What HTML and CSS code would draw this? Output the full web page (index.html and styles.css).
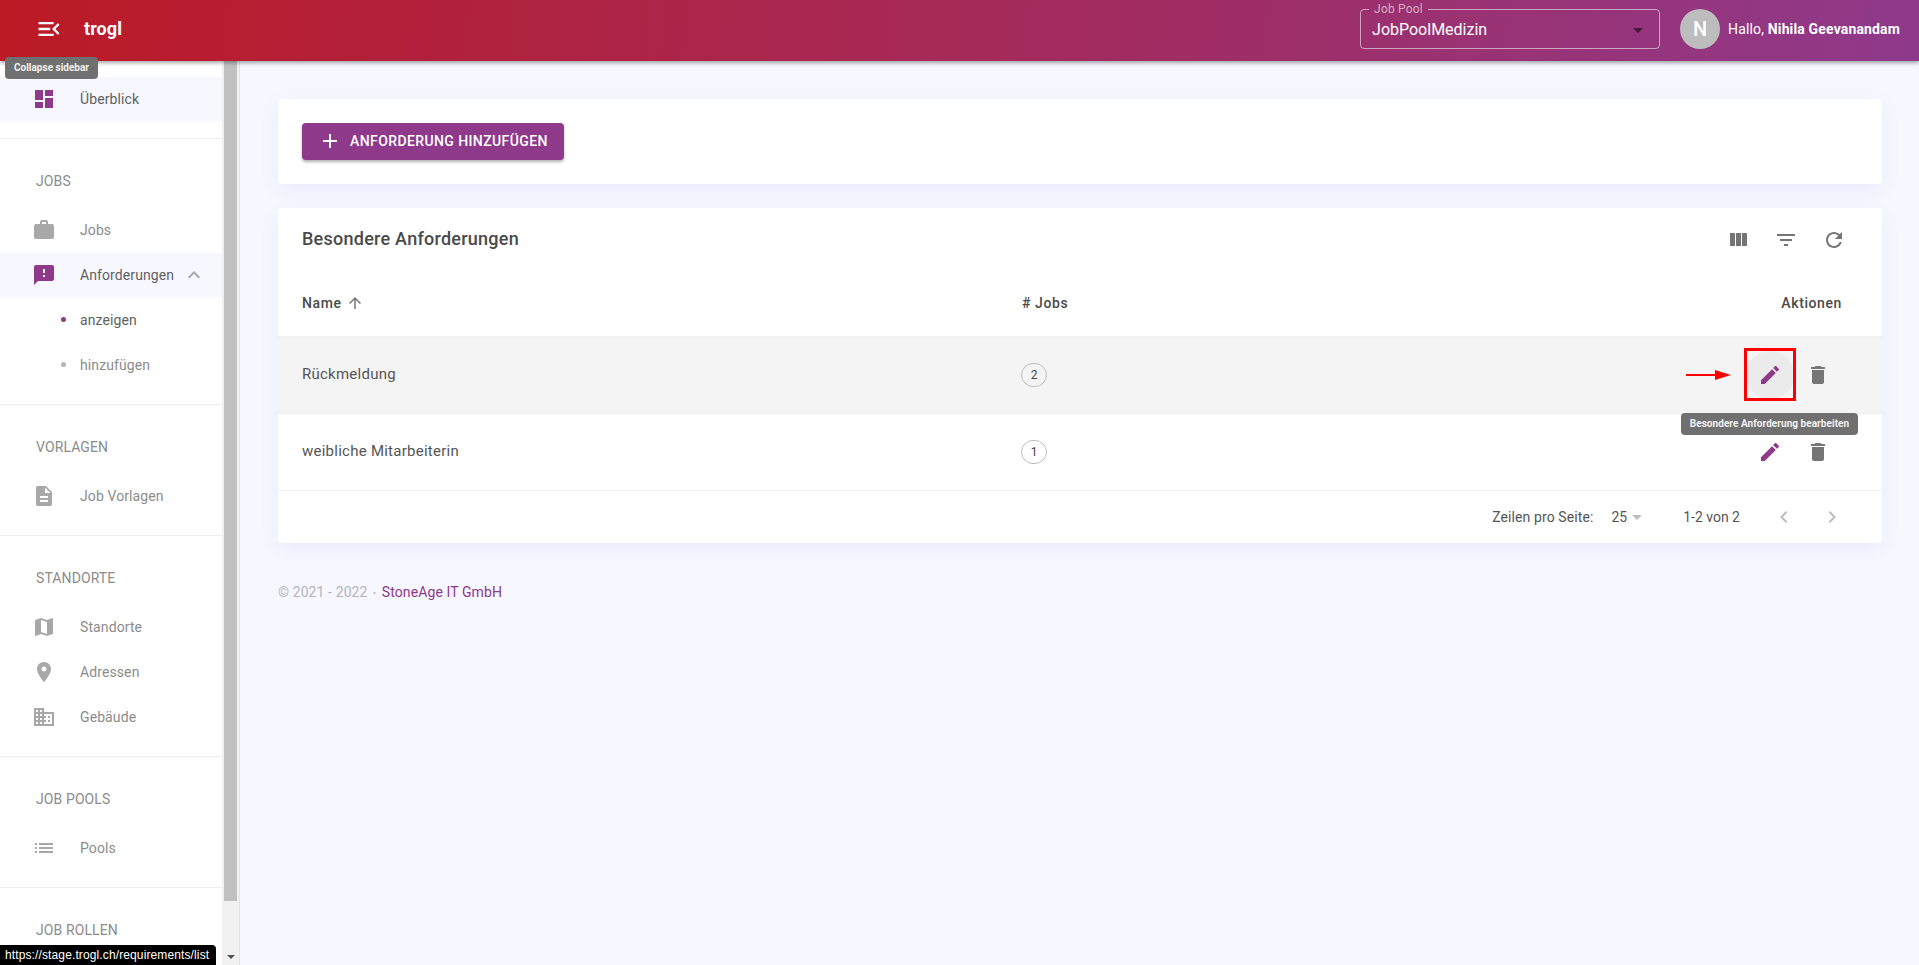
FILE: index.html
```html
<!DOCTYPE html>
<html lang="de">
<head>
    <meta charset="UTF-8">
    <meta name="viewport" content="width=device-width, initial-scale=1.0">
    <title>trogl - Besondere Anforderungen</title>
    <link rel="stylesheet" href="styles.css">
</head>
<body>
<svg class="sprite" aria-hidden="true">
    <symbol id="i-menu" viewBox="0 0 24 24"><path d="M3 18h13v-2H3v2zm0-5h10v-2H3v2zm0-7v2h13V6H3zm18 9.59L17.42 12 21 8.41 19.59 7l-5 5 5 5L21 15.59z"/></symbol>
    <symbol id="i-dashboard" viewBox="0 0 24 24"><path d="M3 13h8V3H3v10zm0 8h8v-6H3v6zm10 0h8V11h-8v10zm0-18v6h8V3h-8z"/></symbol>
    <symbol id="i-work" viewBox="0 0 24 24"><path d="M20 6h-4V4c0-1.11-.89-2-2-2h-4c-1.11 0-2 .89-2 2v2H4c-1.11 0-1.99.89-1.99 2L2 19c0 1.11.89 2 2 2h16c1.11 0 2-.89 2-2V8c0-1.11-.89-2-2-2zm-6 0h-4V4h4v2z"/></symbol>
    <symbol id="i-announce" viewBox="0 0 24 24"><path d="M20 2H4c-1.1 0-1.99.9-1.99 2L2 22l4-4h14c1.1 0 2-.9 2-2V4c0-1.1-.9-2-2-2zm-7 12h-2v-2h2v2zm0-4h-2V6h2v4z"/></symbol>
    <symbol id="i-less" viewBox="0 0 24 24"><path d="M12 8l-6 6 1.41 1.41L12 10.83l4.59 4.58L18 14z"/></symbol>
    <symbol id="i-doc" viewBox="0 0 24 24"><path d="M14 2H6c-1.1 0-1.99.9-1.99 2L4 20c0 1.1.89 2 1.99 2H18c1.1 0 2-.9 2-2V8l-6-6zm2 16H8v-2h8v2zm0-4H8v-2h8v2zm-3-5V3.5L18.5 9H13z"/></symbol>
    <symbol id="i-map" viewBox="0 0 24 24"><path d="M20.5 3l-.16.03L15 5.1 9 3 3.36 4.9c-.21.07-.36.25-.36.48V20.5c0 .28.22.5.5.5l.16-.03L9 18.9l6 2.1 5.64-1.9c.21-.07.36-.25.36-.48V3.5c0-.28-.22-.5-.5-.5zM15 19l-6-2.11V5l6 2.11V19z"/></symbol>
    <symbol id="i-place" viewBox="0 0 24 24"><path d="M12 2C8.13 2 5 5.13 5 9c0 5.25 7 13 7 13s7-7.75 7-13c0-3.87-3.13-7-7-7zm0 9.5c-1.38 0-2.5-1.12-2.5-2.5s1.12-2.5 2.5-2.5 2.5 1.12 2.5 2.5-1.12 2.5-2.5 2.5z"/></symbol>
    <symbol id="i-domain" viewBox="0 0 24 24"><path d="M12 7V3H2v18h20V7H12zM6 19H4v-2h2v2zm0-4H4v-2h2v2zm0-4H4V9h2v2zm0-4H4V5h2v2zm4 12H8v-2h2v2zm0-4H8v-2h2v2zm0-4H8V9h2v2zm0-4H8V5h2v2zm10 12h-8v-2h2v-2h-2v-2h2v-2h-2V9h8v10zm-2-8h-2v2h2v-2zm0 4h-2v2h2v-2z"/></symbol>
    <symbol id="i-list" viewBox="0 0 24 24"><path d="M3 13h2v-2H3v2zm0 4h2v-2H3v2zm0-8h2V7H3v2zm4 4h14v-2H7v2zm0 4h14v-2H7v2zM7 7v2h14V7H7z"/></symbol>
    <symbol id="i-columns" viewBox="0 0 24 24"><path d="M10 18h5V5h-5v13zm-6 0h5V5H4v13zM16 5v13h5V5h-5z"/></symbol>
    <symbol id="i-filter" viewBox="0 0 24 24"><path d="M10 18h4v-2h-4v2zM3 6v2h18V6H3zm3 7h12v-2H6v2z"/></symbol>
    <symbol id="i-refresh" viewBox="0 0 24 24"><path d="M17.65 6.35C16.2 4.9 14.21 4 12 4c-4.42 0-7.99 3.58-7.99 8s3.57 8 7.99 8c3.73 0 6.84-2.55 7.73-6h-2.08c-.82 2.33-3.04 4-5.65 4-3.31 0-6-2.69-6-6s2.69-6 6-6c1.66 0 3.14.69 4.22 1.78L13 11h7V4l-2.35 2.35z"/></symbol>
    <symbol id="i-edit" viewBox="0 0 24 24"><path d="M3 17.25V21h3.75L17.81 9.94l-3.75-3.75L3 17.25zM20.71 7.04c.39-.39.39-1.02 0-1.41l-2.34-2.34c-.39-.39-1.02-.39-1.41 0l-1.83 1.83 3.75 3.75 1.83-1.83z"/></symbol>
    <symbol id="i-delete" viewBox="0 0 24 24"><path d="M6 19c0 1.1.9 2 2 2h8c1.1 0 2-.9 2-2V7H6v12zM19 4h-3.5l-1-1h-5l-1 1H5v2h14V4z"/></symbol>
    <symbol id="i-up" viewBox="0 0 24 24"><path d="M4 12l1.41 1.41L11 7.83V20h2V7.83l5.58 5.59L20 12l-8-8-8 8z"/></symbol>
    <symbol id="i-add" viewBox="0 0 24 24"><path d="M19 13h-6v6h-2v-6H5v-2h6V5h2v6h6v2z"/></symbol>
    <symbol id="i-prev" viewBox="0 0 24 24"><path d="M15.41 7.41L14 6l-6 6 6 6 1.41-1.41L10.83 12z"/></symbol>
    <symbol id="i-next" viewBox="0 0 24 24"><path d="M10 6L8.59 7.41 13.17 12l-4.58 4.59L10 18l6-6z"/></symbol>
    <symbol id="i-drop" viewBox="0 0 24 24"><path d="M7 10l5 5 5-5z"/></symbol>
</svg>

<header class="topbar">
    <button class="menu-btn"><svg class="icon-menu"><use href="#i-menu"/></svg></button>
    <span class="brand">trogl</span>
    <fieldset class="pool">
        <legend>Job Pool</legend>
        <span class="pool-value">JobPoolMedizin</span>
        <svg class="pool-caret"><use href="#i-drop"/></svg>
    </fieldset>
    <span class="avatar">N</span>
    <span class="hello">Hallo, <b>Nihila Geevanandam</b></span>
</header>

<div class="tip tip-sidebar">Collapse sidebar</div>

<div class="shell">
    <aside class="sidebar">
        <nav class="nav">
            <a class="item active"><svg class="ico purple"><use href="#i-dashboard"/></svg>Überblick</a>
            <div class="section">
                <div class="label">Jobs</div>
                <a class="item"><svg class="ico"><use href="#i-work"/></svg>Jobs</a>
                <a class="item active"><svg class="ico purple"><use href="#i-announce"/></svg>Anforderungen<svg class="ico-less"><use href="#i-less"/></svg></a>
                <a class="item sub current"><i class="dot"></i>anzeigen</a>
                <a class="item sub"><i class="dot"></i>hinzufügen</a>
            </div>
            <div class="section">
                <div class="label">Vorlagen</div>
                <a class="item"><svg class="ico"><use href="#i-doc"/></svg>Job Vorlagen</a>
            </div>
            <div class="section">
                <div class="label">Standorte</div>
                <a class="item"><svg class="ico"><use href="#i-map"/></svg>Standorte</a>
                <a class="item"><svg class="ico"><use href="#i-place"/></svg>Adressen</a>
                <a class="item"><svg class="ico"><use href="#i-domain"/></svg>Gebäude</a>
            </div>
            <div class="section">
                <div class="label">Job Pools</div>
                <a class="item"><svg class="ico"><use href="#i-list"/></svg>Pools</a>
            </div>
            <div class="section">
                <div class="label">Job Rollen</div>
            </div>
        </nav>
        <div class="scrollbar">
            <div class="thumb"></div>
            <div class="scroll-end"><i class="scroll-arrow"></i></div>
        </div>
    </aside>

    <main class="content">
        <section class="card card-action">
            <button class="add-btn"><svg class="add-ico"><use href="#i-add"/></svg>Anforderung hinzufügen</button>
        </section>

        <section class="card">
            <div class="toolbar">
                <h2 class="card-title">Besondere Anforderungen</h2>
                <div class="tools">
                    <button class="icon-btn"><svg><use href="#i-columns"/></svg></button>
                    <button class="icon-btn"><svg><use href="#i-filter"/></svg></button>
                    <button class="icon-btn"><svg><use href="#i-refresh"/></svg></button>
                </div>
            </div>
            <table class="grid">
                <thead>
                    <tr>
                        <th class="col-name">Name <svg class="sort"><use href="#i-up"/></svg></th>
                        <th class="col-jobs"># Jobs</th>
                        <th class="col-actions">Aktionen</th>
                    </tr>
                </thead>
                <tbody>
                    <tr class="hovered">
                        <td>Rückmeldung</td>
                        <td><span class="chip">2</span></td>
                        <td class="col-actions">
                            <div class="actions">
                                <div class="edit-wrap">
                                    <svg class="pointer" viewBox="0 0 45 10"><path d="M0 4h29V0l16 5-16 5V6H0z"/></svg>
                                    <button class="icon-btn edit hover"><svg><use href="#i-edit"/></svg></button>
                                    <span class="mark"></span>
                                    <div class="tip tip-edit">Besondere Anforderung bearbeiten</div>
                                </div>
                                <button class="icon-btn"><svg><use href="#i-delete"/></svg></button>
                            </div>
                        </td>
                    </tr>
                    <tr>
                        <td>weibliche Mitarbeiterin</td>
                        <td><span class="chip">1</span></td>
                        <td class="col-actions">
                            <div class="actions">
                                <button class="icon-btn edit"><svg><use href="#i-edit"/></svg></button>
                                <button class="icon-btn"><svg><use href="#i-delete"/></svg></button>
                            </div>
                        </td>
                    </tr>
                </tbody>
            </table>
            <div class="pager">
                <span class="per-label">Zeilen pro Seite:</span>
                <span class="per-page">25<svg class="per-caret"><use href="#i-drop"/></svg></span>
                <span class="range">1-2 von 2</span>
                <button class="icon-btn off"><svg><use href="#i-prev"/></svg></button>
                <button class="icon-btn off"><svg><use href="#i-next"/></svg></button>
            </div>
        </section>

        <footer class="copy">© 2021 - 2022 <span class="sep">•</span> <a class="copy-link">StoneAge IT GmbH</a></footer>
    </main>
</div>

<div class="statusbar">https://stage.trogl.ch/requirements/list</div>
</body>
</html>
```

FILE: styles.css
```css
* {
    box-sizing: border-box;
}

html,
body {
    height: 100%;
}

body {
    margin: 0;
    font-family: Roboto, 'Liberation Sans', sans-serif;
    font-size: 14px;
    color: #555;
    background-color: #f6f7ff;
    overflow: hidden;
}

button {
    font-family: inherit;
    border: none;
    background: none;
    padding: 0;
}

.sprite {
    display: none;
}

/* top bar */
.topbar {
    position: relative;
    z-index: 2;
    display: flex;
    align-items: center;
    height: 61px;
    padding: 0 19px 3px 35px;
    color: #fff;
    background: linear-gradient(95deg, #bc1a25 0%, #8f398b 100%);
    box-shadow: 0 2px 4px rgba(0, 0, 0, 0.35);
}

.menu-btn {
    display: flex;
    width: 28px;
    height: 28px;
}

.icon-menu {
    width: 28px;
    height: 28px;
    fill: #fff;
}

.brand {
    margin-left: 21px;
    margin-top: -2px;
    font-size: 18px;
    font-weight: 700;
    letter-spacing: 0.1px;
}

.pool {
    display: flex;
    align-items: center;
    justify-content: space-between;
    width: 300px;
    height: 46px;
    margin: 0 0 0 auto;
    padding: 0 12px 4px 11px;
    position: relative;
    top: -3px;
    border: 1px solid rgba(255, 255, 255, 0.55);
    border-radius: 4px;
}

.pool legend {
    padding: 0 5px;
    margin-left: -3px;
    font-size: 12px;
    line-height: 12px;
    letter-spacing: 0.2px;
    color: rgba(255, 255, 255, 0.6);
}

.pool-value {
    font-size: 16px;
}

.pool-caret {
    width: 24px;
    height: 24px;
    margin-right: -3px;
    fill: rgba(0, 0, 0, 0.55);
}

.avatar {
    display: flex;
    align-items: center;
    justify-content: center;
    width: 40px;
    height: 40px;
    margin-left: 20px;
    border-radius: 50%;
    background-color: #bdbdbd;
    font-size: 20px;
    font-weight: 500;
}

.hello {
    margin-left: 8px;
    font-size: 14px;
    letter-spacing: 0.15px;
    white-space: nowrap;
}

.hello b {
    font-weight: 700;
}

/* tooltips */
.tip {
    position: absolute;
    z-index: 5;
    font-size: 10px;
    font-weight: 700;
    line-height: 22px;
    height: 22px;
    color: #f2f2f2;
    background-color: #707070;
    border-radius: 4px;
    text-align: center;
    white-space: nowrap;
}

.tip-sidebar {
    top: 57px;
    left: 5px;
    width: 93px;
}

.tip-edit {
    top: 62px;
    left: -65px;
    width: 177px;
    letter-spacing: 0.05px;
}

/* page frame */
.shell {
    display: flex;
    height: 904px;
}

.sidebar {
    display: flex;
    flex: 0 0 240px;
    background-color: #fff;
    border-right: 1px solid #e4e4e4;
}

.nav {
    flex: 0 0 222px;
    padding-top: 16px;
    overflow: hidden;
}

.scrollbar {
    display: flex;
    flex-direction: column;
    flex: 0 0 17px;
    padding: 0 2px;
    background-color: #f1f1f1;
}

.thumb {
    height: 840px;
    background-color: #c1c1c1;
}

.scroll-end {
    display: flex;
    flex: 1;
    align-items: flex-end;
    justify-content: center;
    padding-bottom: 6px;
}

.scroll-arrow {
    width: 0;
    height: 0;
    border-left: 4px solid transparent;
    border-right: 4px solid transparent;
    border-top: 4px solid #505050;
}

/* sidebar items */
.item {
    display: flex;
    align-items: center;
    height: 45px;
    padding: 0 0 2px 32px;
    letter-spacing: 0.1px;
    color: #8c8c8c;
}

.item.active {
    color: #616161;
    background-color: #f6f7ff;
}

.ico {
    flex: none;
    width: 24px;
    height: 24px;
    margin-right: 24px;
    fill: #a8a8a8;
}

.ico.purple {
    fill: #8f398b;
}

.ico-less {
    width: 24px;
    height: 24px;
    margin-left: 8px;
    fill: #a8a8a8;
}

.item.sub {
    padding-left: 61px;
}

.item.current {
    color: #616161;
}

.dot {
    width: 5px;
    height: 5px;
    margin-right: 14px;
    border-radius: 50%;
    background-color: #b4b4b4;
}

.current .dot {
    background-color: #8f398b;
}

.section {
    margin-top: 16px;
    border-top: 1px solid #eee;
}

.label {
    height: 69px;
    padding: 32px 0 0 36px;
    line-height: 20px;
    letter-spacing: 0.1px;
    text-transform: uppercase;
    color: #8c8c8c;
}

/* main column */
.content {
    flex: 1;
    display: flex;
    flex-direction: column;
    gap: 24px;
    padding: 38px 37px 0 38px;
}

.card {
    background-color: #fff;
    border-radius: 4px;
    box-shadow: 0 6px 20px rgba(90, 90, 220, 0.07);
}

.card-action {
    height: 85px;
    padding: 24px;
}

.add-btn {
    display: flex;
    align-items: center;
    width: 262px;
    height: 37px;
    padding: 0 0 2px 16px;
    color: #fff;
    font-size: 14px;
    font-weight: 500;
    letter-spacing: 0.4px;
    text-transform: uppercase;
    background-color: #8f398b;
    border-radius: 4px;
    box-shadow: 0 2px 3px rgba(0, 0, 0, 0.3);
}

.add-btn .add-ico {
    width: 24px;
    height: 24px;
    margin-right: 8px;
    fill: #fff;
}

.toolbar {
    display: flex;
    align-items: center;
    justify-content: space-between;
    height: 64px;
    padding: 0 24px;
}

.card-title {
    margin: -4px 0 0;
    font-size: 18px;
    font-weight: 500;
    letter-spacing: 0.25px;
    color: #4a4a4a;
}

.tools {
    display: flex;
}

.icon-btn {
    display: flex;
    align-items: center;
    justify-content: center;
    width: 48px;
    height: 48px;
    border-radius: 50%;
}

.icon-btn svg {
    width: 24px;
    height: 24px;
    fill: #757575;
}

.icon-btn.edit svg {
    fill: #8f398b;
}

.icon-btn.hover {
    background-color: #ebebeb;
}

.icon-btn.off svg {
    fill: #bdbdbd;
}

/* table */
.grid {
    width: 100%;
    border-collapse: separate;
    border-spacing: 0;
    table-layout: fixed;
}

.grid th {
    height: 65px;
    padding: 0 24px 2px;
    font-weight: 500;
    font-size: 14px;
    letter-spacing: 0.6px;
    text-align: left;
    color: #4a4a4a;
    border-bottom: 1px solid #eee;
}

.grid td {
    height: 77px;
    padding: 0 24px 2px;
    font-size: 15px;
    letter-spacing: 0.25px;
    color: #555;
    border-bottom: 1px solid #eee;
}

.col-name {
    width: 720px;
}

.grid .col-actions {
    padding-right: 40px;
    text-align: right;
}

.sort {
    width: 18px;
    height: 18px;
    vertical-align: -4px;
    fill: #757575;
}

.hovered {
    background-color: #f4f4f4;
}

.chip {
    display: inline-flex;
    align-items: center;
    justify-content: center;
    width: 26px;
    height: 24px;
    margin: 2px 0 0 -1px;
    font-size: 12px;
    letter-spacing: 0;
    color: #444;
    border: 1px solid #bdbdbd;
    border-radius: 12px;
}

.actions {
    display: flex;
    justify-content: flex-end;
    margin-top: 2px;
}

.edit-wrap {
    position: relative;
}

.mark {
    position: absolute;
    top: -3px;
    left: -2px;
    width: 52px;
    height: 53px;
    border: 3px solid #f00;
}

.pointer {
    position: absolute;
    top: 19px;
    left: -60px;
    width: 45px;
    height: 10px;
    fill: #f00;
}

.pager {
    display: flex;
    align-items: center;
    justify-content: flex-end;
    height: 52px;
    padding: 0 26px 1px 0;
}

.per-label {
    letter-spacing: 0.1px;
}

.per-page {
    display: flex;
    align-items: center;
    margin-left: 18px;
}

.per-caret {
    width: 24px;
    height: 24px;
    margin-left: -2px;
    fill: #bdbdbd;
}

.range {
    margin-left: 34px;
    margin-right: 20px;
}

/* footer */
.copy {
    margin-top: 17px;
    letter-spacing: 0.1px;
    color: #b5b5b8;
}

.sep {
    padding: 0 2px;
    font-size: 9px;
    vertical-align: 1px;
}

.copy-link {
    color: #8f398b;
}

/* browser status bubble */
.statusbar {
    position: absolute;
    left: 0;
    bottom: 0;
    width: 216px;
    height: 20px;
    padding-left: 5px;
    font-family: 'Liberation Sans', sans-serif;
    font-size: 12px;
    letter-spacing: 0.12px;
    line-height: 20px;
    color: #fff;
    background-color: #000;
    border-top-right-radius: 4px;
    white-space: nowrap;
    overflow: hidden;
}
```
